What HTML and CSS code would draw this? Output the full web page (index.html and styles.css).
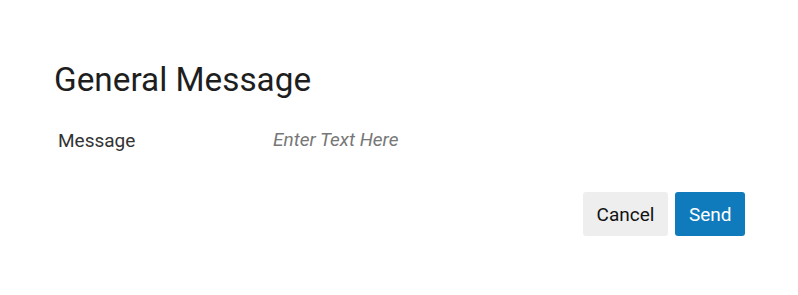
FILE: index.html
```html
<!DOCTYPE html>
<html lang="en">

<head>
    <meta charset="UTF-8">
    <meta name="viewport" content="width=device-width, initial-scale=1.0">
    <title>General Message</title>
    <link rel="stylesheet" href="styles.css">
</head>

<body>
    <!-- 对话框 -->
    <div class="dialog">
        <h1 class="title">General Message</h1>
        <div class="field">
            <label class="label" for="msg">Message</label>
            <input class="input" id="msg" type="text" placeholder="Enter Text Here">
        </div>
        <!-- 按钮 -->
        <div class="actions">
            <button class="btn btn-cancel">Cancel</button>
            <button class="btn btn-send">Send</button>
        </div>
    </div>
</body>

</html>
```

FILE: styles.css
```css
* {
    padding: 0;
    margin: 0;
    box-sizing: border-box;
}

body {
    background: #fff;
    font-family: Roboto, "Liberation Sans", sans-serif;
    color: #222;
}

.dialog {
    width: 798px;
    padding: 60px 53px 0 54px;
}

.title {
    font-size: 33.3px;
    font-weight: 400;
    line-height: 40px;
    color: #1e1e1e;
}

.field {
    display: flex;
    align-items: center;
    margin-top: 25px;
    padding-left: 4px;
}

.label {
    width: 215px;
    font-size: 19px;
    color: #333;
}

.input {
    flex: 1;
    border: none;
    outline: none;
    font-family: inherit;
    font-size: 19px;
    line-height: 30px;
    color: #333;
    background: transparent;
}

.input::placeholder {
    color: #777;
    font-style: italic;
}

.actions {
    display: flex;
    justify-content: flex-end;
    gap: 7px;
    margin-top: 37px;
}

.btn {
    height: 44px;
    border: none;
    border-radius: 3px;
    font-family: inherit;
    font-size: 19px;
    padding: 0 14px;
}

.btn-cancel {
    background: #eeeeee;
    color: #111;
}

.btn-send {
    background: #0f7bbd;
    color: #fff;
    padding: 0 13.5px;
}
```
